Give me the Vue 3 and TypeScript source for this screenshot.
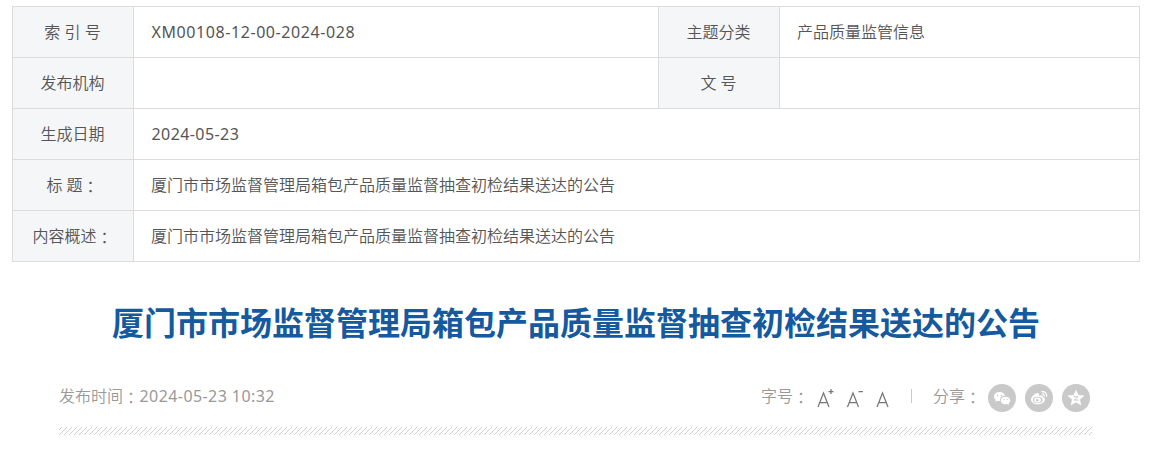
<script setup lang="ts">
interface Cell {
  text: string
  head?: boolean
  span?: number
  latin?: string
  colon?: boolean
}

const title: string = '厦门市市场监督管理局箱包产品质量监督抽查初检结果送达的公告'

const rows: Array<Array<Cell>> = [
  [
    { text: '索 引 号', head: true },
    { text: 'XM00108-12-00-2024-028', latin: 'latin code' },
    { text: '主题分类', head: true },
    { text: '产品质量监管信息' },
  ],
  [
    { text: '发布机构', head: true },
    { text: '' },
    { text: '文 号', head: true },
    { text: '' },
  ],
  [
    { text: '生成日期', head: true },
    { text: '2024-05-23', span: 3, latin: 'latin' },
  ],
  [
    { text: '标 题', head: true, colon: true },
    { text: title, span: 3 },
  ],
  [
    { text: '内容概述', head: true, colon: true },
    { text: title, span: 3 },
  ],
]
</script>

<template>
  <div class="article">
    <table class="info">
      <colgroup>
        <col class="col-head">
        <col class="col-main">
        <col class="col-head">
        <col>
      </colgroup>
      <tr v-for="(row, i) in rows" :key="i">
        <td
          v-for="(cell, j) in row"
          :key="j"
          :colspan="cell.span"
          :class="{ head: cell.head }"
        ><span :class="cell.latin">{{ cell.text }}</span><span v-if="cell.colon" class="colon">：</span></td>
      </tr>
    </table>

    <h1 class="title">{{ title }}</h1>

    <div class="meta">
      <div class="time">发布时间<span class="colon">：</span><span class="latin">2024-05-23 10:32</span></div>
      <div class="tools">
        <span class="label">字号<span class="colon">：</span></span>
        <svg class="sizes" width="76" height="24" viewBox="0 0 76 24" fill="none" stroke="#777" stroke-width="1.25">
          <path d="M2 20 7.500 6 13 20M3.800 15.500H11.200M12.500 4.500H17.500M15 2V7" />
          <path d="M31.500 20 37 6 42.500 20M33.300 15.500H40.700M42.500 4.500H47" />
          <path d="M61 20 66.500 6 72 20M62.800 15.500H70.200" />
        </svg>
        <i class="divider"></i>
        <span class="label">分享<span class="colon">：</span></span>
        <div class="share">
          <svg width="28" height="28" viewBox="0 0 28 28">
            <circle cx="14" cy="14" r="14" fill="#c9c9c9" />
            <path fill="#fff" d="M11.500 8C8.400 8 6 10 6 12.500c0 1.500.8 2.700 2 3.500l-.6 2 2.200-1.200c.8.2 1.600.3 2.500.2-.6-3 2-5.300 5-5.200C16.600 9.500 14.400 8 11.500 8z" />
            <path fill="#fff" d="M17.500 12.700c-2.700 0-4.800 1.700-4.800 3.800s2.100 3.800 4.800 3.800c.6 0 1.200-.1 1.700-.2l1.700 1-.4-1.700c1.100-.7 1.800-1.700 1.800-2.900 0-2.100-2.100-3.800-4.800-3.800z" />
            <g fill="#c9c9c9">
              <circle cx="9.600" cy="11.500" r=".7" /><circle cx="13.500" cy="11.500" r=".7" />
              <circle cx="16" cy="15.500" r=".6" /><circle cx="19.200" cy="15.500" r=".6" />
            </g>
          </svg>
          <svg width="28" height="28" viewBox="0 0 28 28">
            <circle cx="14" cy="14" r="14" fill="#c9c9c9" />
            <path fill="#fff" d="M12.500 9c-2.600.2-6.500 3.700-6.500 6.700 0 2.700 3.100 4.500 6.700 4.500 4.400 0 7.300-2.300 7.300-4.800 0-1.300-1-2-2.200-2.300.5-1.500-.7-2.300-3.900-1.200.5-1.400.1-3-1.400-2.900z" />
            <ellipse cx="12.700" cy="15.900" rx="4.800" ry="3.200" fill="#c9c9c9" />
            <ellipse cx="12.500" cy="16" rx="3.500" ry="2.600" fill="#fff" />
            <circle cx="12.300" cy="16.200" r="1.200" fill="#c9c9c9" />
            <path fill="none" stroke="#fff" stroke-width="1.200" d="M16.500 7.700c3.400-.7 5.900 2 4.900 5.300M17 10c1.500-.2 2.500.8 2.200 2.300" />
          </svg>
          <svg width="28" height="28" viewBox="0 0 28 28">
            <circle cx="14" cy="14" r="14" fill="#c9c9c9" />
            <path fill="#fff" stroke="#fff" stroke-width=".6" stroke-linejoin="round" d="m14 6.300 2.200 5 5.800.5-4.400 3.700 1.400 5.500-5-3-5 3 1.400-5.500L6 11.800l5.800-.5z" />
            <path fill="none" stroke="#c9c9c9" stroke-width="1" d="M11.500 12.700h4.500l-3.800 3.400h4.500" />
          </svg>
        </div>
      </div>
    </div>
    <svg class="stripes" width="1033" height="8">
      <defs>
        <pattern id="hatch" width="5" height="8" patternUnits="userSpaceOnUse">
          <path d="M-10 8-2 0M-5 8 3 0M0 8 8 0" stroke="#d0d0d0" stroke-width="1" />
        </pattern>
      </defs>
      <rect width="1033" height="8" fill="url(#hatch)" />
    </svg>
  </div>
</template>

<style>
body {
  margin: 0;
  background: #fff;
}
</style>

<style scoped>
.article {
  box-sizing: border-box;
  height: 452px;
  padding: 6px 11px 0 12px;
  overflow: hidden;
  font-family: "Noto Sans", "Noto Sans CJK SC", sans-serif;
  font-size: 16px;
  font-weight: 350;
  color: #555;
}

.info {
  width: 1128px;
  table-layout: fixed;
  border-collapse: collapse;
}

.col-head {
  width: 121px;
}

.col-main {
  width: 525px;
}

.info td {
  box-sizing: border-box;
  height: 51px;
  padding: 0 17px;
  border: 1px solid #dcdcdc;
  line-height: 24px;
  white-space: nowrap;
}

.info td.head {
  padding: 0 1px 0 0;
  background: #f4f6f8;
  text-align: center;
}

.latin {
  margin-left: 0.5px;
  font-weight: 400;
  letter-spacing: 0.42px;
}

.code {
  letter-spacing: 0.58px;
}

.colon {
  font-family: "Noto Sans CJK TC", sans-serif;
  line-height: 1;
  vertical-align: -2px;
}

.title {
  margin: 37px 0 0;
  font-size: 32px;
  line-height: 48px;
  font-weight: 700;
  text-align: center;
  white-space: nowrap;
  color: #15599f;
}

.meta {
  display: flex;
  justify-content: space-between;
  height: 28px;
  margin: 37px 50px 0 47px;
  line-height: 24px;
  color: #999;
}

.tools {
  display: flex;
}

.label {
  width: 48px;
  white-space: nowrap;
}

.sizes {
  margin: 3px 0 0 7px;
}

.divider {
  width: 1px;
  height: 14px;
  margin: 5px 21px 0 19px;
  background: #ccc;
}

.share {
  display: flex;
  gap: 9px;
  margin-left: 7px;
}

.stripes {
  display: block;
  margin: 15px 0 0 47px;
}
</style>
